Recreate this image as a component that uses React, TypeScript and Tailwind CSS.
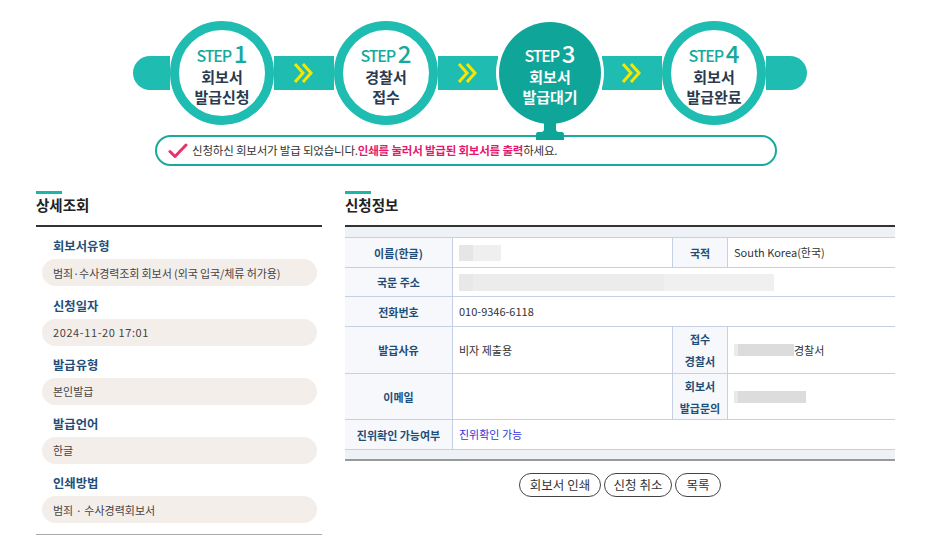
import React from 'react';

const steps = [
    { no: 1, lines: ['회보서', '발급신청'] },
    { no: 2, lines: ['경찰서', '접수'] },
    { no: 3, lines: ['회보서', '발급대기'] },
    { no: 4, lines: ['회보서', '발급완료'] },
];

const details = [
    { label: '회보서유형', value: '범죄·수사경력조회 회보서 (외국 입국/체류 허가용)', track: 'tracking-[-0.1px]' },
    { label: '신청일자', value: '2024-11-20 17:01', track: 'tracking-[0.6px]' },
    { label: '발급유형', value: '본인발급', track: '' },
    { label: '발급언어', value: '한글', track: '' },
    { label: '인쇄방법', value: '범죄 · 수사경력회보서', track: '' },
];

function Chevrons() {
    return (
        <svg width="22" height="24" viewBox="0 0 22 24" fill="none">
            <path d="M2 3 L10 12 L2 21" stroke="#f7e600" strokeWidth="3" />
            <path d="M10 3 L18 12 L10 21" stroke="#f7e600" strokeWidth="3" />
        </svg>
    );
}

function StepCircle({ no, lines }: { no: number; lines: string[] }) {
    const active = no === 3;
    return (
        <div
            className={
                active
                    ? 'relative w-[102px] h-[102px] shrink-0 rounded-full bg-[#0fa699] ring-[3px] ring-white flex flex-col items-center justify-center pt-[6px] text-white z-10'
                    : 'relative w-[104px] h-[104px] shrink-0 rounded-full bg-white border-[9px] border-[#1ebcb1] flex flex-col items-center justify-center pt-[6px] text-[#2b3a4c]'
            }
        >
            <div className="flex items-end leading-none -mt-[2px]">
                <span className={`text-[16px] font-medium tracking-[-1.2px] ${active ? 'text-white' : 'text-[#17a99c]'}`}>STEP</span>
                <span className={`text-[24px] font-medium ml-[3px] leading-[20px] ${active ? 'text-white' : 'text-[#17a99c]'}`}>{no}</span>
            </div>
            <div className="mt-[4px] text-[15px] font-bold leading-[20px] text-center">
                {lines.map((l) => (
                    <div key={l}>{l}</div>
                ))}
            </div>
            {active && (
                <svg className="absolute top-[98px] left-1/2 -translate-x-1/2" width="30" height="20" viewBox="0 0 30 20">
                    <path d="M9 0 H21 V9 Q21 12 24 12 H27 Q29 12 29 15 V20 H1 V15 Q1 12 3 12 H6 Q9 12 9 9 Z" fill="#0fa699" />
                </svg>
            )}
        </div>
    );
}

function Connector() {
    return (
        <div className="w-[60px] h-[34px] bg-[#1ebcb1] shrink-0 flex items-center justify-center">
            <Chevrons />
        </div>
    );
}

function Blur({ w }: { w: number }) {
    return (
        <div className="flex h-[16px]" style={{ width: w }}>
            <div className="w-[14px] bg-[#e6e6e6]" />
            <div className="flex-1 bg-[#efefef]" />
        </div>
    );
}

const th = 'bg-[#f6f8fb] border-r border-[#c5d0e5] flex items-center justify-center text-center text-[11px] font-bold text-[#1f4e79] leading-[22px]';
const td = 'border-r border-[#c5d0e5] flex items-center px-[6px] text-[11px] text-[#333]';

export default function App() {
    return (
        <div className="w-[936px] h-[545px] bg-white overflow-hidden font-['Noto_Sans_CJK_KR','Noto_Sans',sans-serif]">
            {/* stepper */}
            <div className="pt-[21px] pl-[133px] flex items-center">
                <div className="w-[37px] h-[34px] bg-[#1ebcb1] rounded-l-full shrink-0" />
                <StepCircle {...steps[0]} />
                <Connector />
                <StepCircle {...steps[1]} />
                <Connector />
                <div className="w-[1px]" />
                <StepCircle {...steps[2]} />
                <div className="w-[1px]" />
                <Connector />
                <StepCircle {...steps[3]} />
                <div className="w-[41px] h-[34px] bg-[#1ebcb1] rounded-r-full shrink-0" />
            </div>

            {/* notice */}
            <div className="mt-[10px] ml-[155px] w-[622px] h-[31px] rounded-full border-2 border-[#1aaa9d] bg-white flex items-center pl-[11px]">
                <svg width="20" height="16" viewBox="0 0 20 16" fill="none">
                    <path d="M2 8.5 L7 13.5 L18 2" stroke="#e8336a" strokeWidth="3" strokeLinecap="round" strokeLinejoin="round" />
                </svg>
                <span className="ml-[4px] text-[11.5px] text-[#333] tracking-[-0.2px]">
                    신청하신 회보서가 발급 되었습니다.
                    <b className="text-[#e6196e]">인쇄를 눌러서 발급된 회보서를 출력</b>
                    하세요.
                </span>
            </div>

            {/* body */}
            <div className="mt-[25px] pl-[36px] flex gap-[23px]">
                {/* left */}
                <div className="w-[286px]">
                    <div className="w-[26px] h-[3px] bg-[#1cb5a9]" />
                    <h2 className="text-[14.5px] font-bold text-[#222] leading-[22px] mb-[9px]">상세조회</h2>
                    <div className="border-t-2 border-[#333]" />
                    {details.map((d) => (
                        <div key={d.label} className="pt-[10.3px]">
                            <div className="pl-[17px] text-[12.3px] font-bold text-[#1f4e79] leading-[18px] mb-[4px]">{d.label}</div>
                            <div className={`ml-[6px] mr-[5px] h-[27px] rounded-full bg-[#f4eeeb] flex items-center px-[11px] text-[11px] text-[#444] ${d.track}`}>
                                {d.value}
                            </div>
                        </div>
                    ))}
                    <div className="mt-[11px] border-t border-[#aaa]" />
                </div>

                {/* right */}
                <div className="w-[550px]">
                    <div className="w-[26px] h-[3px] bg-[#1cb5a9]" />
                    <h2 className="text-[14.5px] font-bold text-[#222] leading-[22px] mb-[9px]">신청정보</h2>
                    <div className="border-t-2 border-[#333]" />
                    <div className="h-[11px] bg-[#eef1f6] border-b border-[#c5d0e5]" />

                    <div className="grid grid-cols-[108px_220px_55px_167px] border-b border-[#c5d0e5] h-[30px]">
                        <div className={th}>이름(한글)</div>
                        <div className={td}><Blur w={42} /></div>
                        <div className={th}>국적</div>
                        <div className={`${td} border-r-0`}>South Korea(한국)</div>
                    </div>
                    <div className="grid grid-cols-[108px_442px] border-b border-[#c5d0e5] h-[29px]">
                        <div className={th}>국문 주소</div>
                        <div className={`${td} border-r-0`}>
                            <div className="flex h-[17px] w-[315px]">
                                <div className="w-[14px] bg-[#e8e8e8]" />
                                <div className="flex-1 bg-[#ececec]" />
                                <div className="w-[110px] bg-[#f0f0f0]" />
                            </div>
                        </div>
                    </div>
                    <div className="grid grid-cols-[108px_442px] border-b border-[#c5d0e5] h-[30px]">
                        <div className={th}>전화번호</div>
                        <div className={`${td} border-r-0`}>010-9346-6118</div>
                    </div>
                    <div className="grid grid-cols-[108px_220px_55px_167px] border-b border-[#c5d0e5] h-[47px]">
                        <div className={th}>발급사유</div>
                        <div className={td}>비자 제출용</div>
                        <div className={th}>접수<br />경찰서</div>
                        <div className={`${td} border-r-0`}>
                            <div className="w-[60px] h-[12px] flex">
                                <div className="w-[4px] bg-[#ebebeb]" />
                                <div className="flex-1 bg-[#dcdcdc]" />
                            </div>
                            <span>경찰서</span>
                        </div>
                    </div>
                    <div className="grid grid-cols-[108px_220px_55px_167px] border-b border-[#c5d0e5] h-[46px]">
                        <div className={th}>이메일</div>
                        <div className={td} />
                        <div className={th}>회보서<br />발급문의</div>
                        <div className={`${td} border-r-0`}>
                            <div className="w-[72px] h-[12px] flex">
                                <div className="w-[4px] bg-[#e8e8e8]" />
                                <div className="flex-1 bg-[#dcdcdc]" />
                            </div>
                        </div>
                    </div>
                    <div className="grid grid-cols-[108px_442px] border-b border-[#c5d0e5] h-[30px]">
                        <div className={th}>진위확인 가능여부</div>
                        <div className={`${td} border-r-0 text-[#3434e0]`}>진위확인 가능</div>
                    </div>
                    <div className="h-[11px] bg-[#eef1f6] border-b-2 border-[#999]" />

                    <div className="mt-[12px] flex justify-center gap-[3px]">
                        <button className="w-[82px] h-[24px] rounded-full border-[1.5px] border-[#444] text-[12.5px] text-[#333] leading-none">회보서 인쇄</button>
                        <button className="w-[68px] h-[24px] rounded-full border-[1.5px] border-[#444] text-[12.5px] text-[#333] leading-none">신청 취소</button>
                        <button className="w-[46px] h-[24px] rounded-full border-[1.5px] border-[#444] text-[12.5px] text-[#333] leading-none">목록</button>
                    </div>
                </div>
            </div>
        </div>
    );
}
